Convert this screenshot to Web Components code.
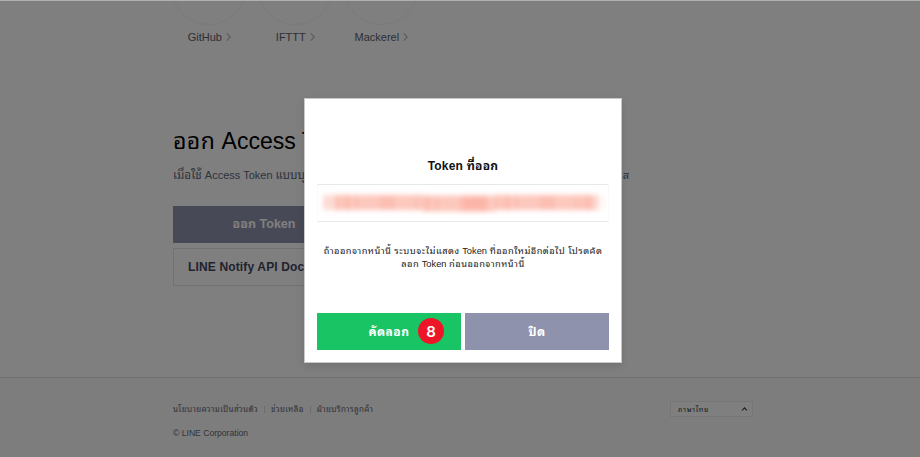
<!DOCTYPE html>
<html lang="th"><head><meta charset="utf-8"><title>LINE Notify</title>
<style>
html,body{margin:0;width:920px;height:457px;overflow:hidden;background:#fff}
body{font-family:"Liberation Sans","Noto Sans Thai Looped",Loma,Waree,"Noto Sans Thai","Noto Sans",sans-serif}
</style></head><body>
<notify-page></notify-page>
<script>
const define=(name,html)=>customElements.define(name,class extends HTMLElement{
  constructor(){super();this.attachShadow({mode:'open'}).innerHTML=html;}
});
define('service-link',`<style>
:host{display:flex;flex-direction:column;align-items:center;width:86px;flex:none}
i{box-sizing:border-box;width:76px;height:76px;border:1px solid #f4f4f4;border-radius:50%;margin-top:-51px}
span{display:flex;align-items:center;gap:4px;font-size:11px;line-height:14px;margin-top:5px;color:#5b606c;white-space:nowrap}
svg{width:5px;height:8px}
</style><i></i><span><slot></slot><svg viewBox="0 0 5 9" fill="none" stroke="#b8b8b8" stroke-width="1.3"><path d="M.6.5 4.4 4.5.6 8.5"/></svg></span>`);
define('token-section',`<style>
:host{display:block;padding:75px 0 0 173px;height:254px;box-sizing:content-box}
h1{margin:0;font-weight:400;font-size:23px;line-height:36px;color:#000;white-space:nowrap}
h1 span{letter-spacing:.4px}
.desc{display:flex;justify-content:space-between;width:456px;margin-top:7px;font-size:11px;line-height:18px;color:#616675;white-space:nowrap}
.desc i{font-style:normal;font-size:11.5px;letter-spacing:.05px}
.btn{box-sizing:border-box;width:182px;height:37px;margin-top:22px;background:#8f92ad;color:#fff;font-weight:bold;font-size:12.5px;line-height:37px;text-align:center}
.doc{box-sizing:border-box;width:310px;height:38px;margin-top:5px;border:1px solid #e5e5e5;padding-left:14px;font-weight:bold;font-size:12px;letter-spacing:.15px;line-height:37px;color:#42465f}
</style>
<h1><span>ออก</span> Access Token</h1>
<div class="desc"><span><i>เมื่อใช้</i> Access Token <i>แบบบุคคล</i></span><span>ส</span></div>
<div class="btn">ออก Token</div><div class="doc">LINE Notify API Document</div>`);
define('language-select',`<style>
:host{box-sizing:border-box;display:flex;align-items:center;justify-content:space-between;width:83px;height:16px;padding:0 4px 1px 7px;border:1px solid #ececec;background:#fff;font-size:7px;letter-spacing:.7px;color:#343434}
svg{width:7px;height:6px}
</style><slot></slot><svg viewBox="0 0 7 6" fill="none" stroke="#333" stroke-width="1.1"><path d="M1 4.5 3.5 1.8 6 4.5"/></svg>`);
define('page-footer',`<style>
:host{display:block;box-sizing:border-box;height:80px;padding:23px 167px 0 173px;border-top:1px solid #e2e2e2;background:#fafafa;color:#646875;font-size:8px}
.row{display:flex;justify-content:space-between}
nav{display:flex;align-items:center;height:16px;white-space:nowrap;letter-spacing:.36px}
nav span{line-height:7px}
nav span+span{margin-left:6px;padding-left:6px;border-left:1px solid #d8d8d8}
p{margin:10px 0 0;line-height:12px;font-size:8.6px}
</style><div class="row"><nav><span>นโยบายความเป็นส่วนตัว</span><span>ช่วยเหลือ</span><span>ฝ่ายบริการลูกค้า</span></nav><language-select>ภาษาไทย</language-select></div><p>© LINE Corporation</p>`);
define('blurred-token',`<style>
:host{display:block;box-sizing:border-box;height:38px;border:1px solid #ececec;border-color:#e8e8e8 #fafafa;padding:8px 4px;overflow:hidden}
svg{display:block;width:100%;height:20px;overflow:visible}
</style><svg viewBox="0 0 282 20" preserveAspectRatio="none"><defs><filter id="f" x="-5%" y="-50%" width="110%" height="200%"><feGaussianBlur stdDeviation="2 2.6"/></filter></defs><g filter="url(#f)"></g></svg>`);
define('modal-button',`<style>
:host{display:flex;box-sizing:border-box;align-items:center;justify-content:center;position:relative;height:37px;padding-bottom:2px;flex:1;background:#8f92ad;color:#fff;font-weight:bold;font-size:12px;letter-spacing:.5px}
:host([primary]){background:#18c464}
::slotted(b){position:absolute;left:101px;top:4.5px;width:26px;height:26px;border-radius:50%;background:#ed1628;font:600 15px/27px Inter,sans-serif;letter-spacing:0;text-align:center}
</style><slot></slot><slot name="badge"></slot>`);
define('token-dialog',`<style>
:host{position:absolute;left:304px;top:98px;width:318px;height:265px;box-sizing:border-box;padding:57px 12px 0;background:#fff;border:1px solid #c8c8c8;box-shadow:0 3px 8px rgba(0,0,0,.12);color:#222}
h2{margin:0;text-align:center;font-weight:bold;font-size:12px;line-height:20px;letter-spacing:.2px;color:#111}
blurred-token{margin-top:8px}
p{margin:23px 0 0;height:26px;text-align:center;font-size:9.3px;line-height:13px;white-space:nowrap}
p span{letter-spacing:.45px}
.actions{display:flex;gap:4px;margin-top:42px}
</style><h2>Token ที่ออก</h2><blurred-token></blurred-token>
<p><span>ถ้าออกจากหน้านี้ ระบบจะไม่แสดง</span> Token <span>ที่ออกใหม่อีกต่อไป โปรดคัด</span><br><span>ลอก</span> Token <span>ก่อนออกจากหน้านี้</span></p>
<div class="actions"><modal-button primary>คัดลอก<b slot="badge">8</b></modal-button><modal-button>ปิด</modal-button></div>`);
define('notify-page',`<style>
:host{display:block;position:relative;width:920px;height:457px;overflow:hidden}
header{display:flex;height:48px;padding-left:166.3px}
.shade{position:absolute;inset:0;background:rgba(0,0,0,.5);box-sizing:border-box;border-top:1px solid #aeb1b0;background-clip:padding-box}
</style><header><service-link>GitHub</service-link><service-link>IFTTT</service-link><service-link>Mackerel</service-link></header>
<token-section></token-section><page-footer></page-footer><div class="shade"></div><token-dialog></token-dialog>`);
// Smeared glyph columns of the hidden token.
const g=document.querySelector('notify-page').shadowRoot.querySelector('token-dialog').shadowRoot.querySelector('blurred-token').shadowRoot.querySelector('g');
const fills=['#fddcd5','#fdcac0','#fcc0b4','#fdc7bc','#fcbdb0','#fdc8bd'];
for(let i=0;i<71;i++){const r=document.createElementNS('http://www.w3.org/2000/svg','rect');
 const low=i>24&&i<43,end=i>68,x=1+i*4;
 r.setAttribute('x',x);r.setAttribute('y',low?2.6:2);r.setAttribute('width',end?(i===70?1:0):4.4);r.setAttribute('height',low?15.8:15);
 r.setAttribute('fill',i<3||i>67?fills[0]:i>34&&i<41?'#fcb6a8':fills[1+(i*7+(i>>2))%5]);g.append(r);}
</script></body></html>
